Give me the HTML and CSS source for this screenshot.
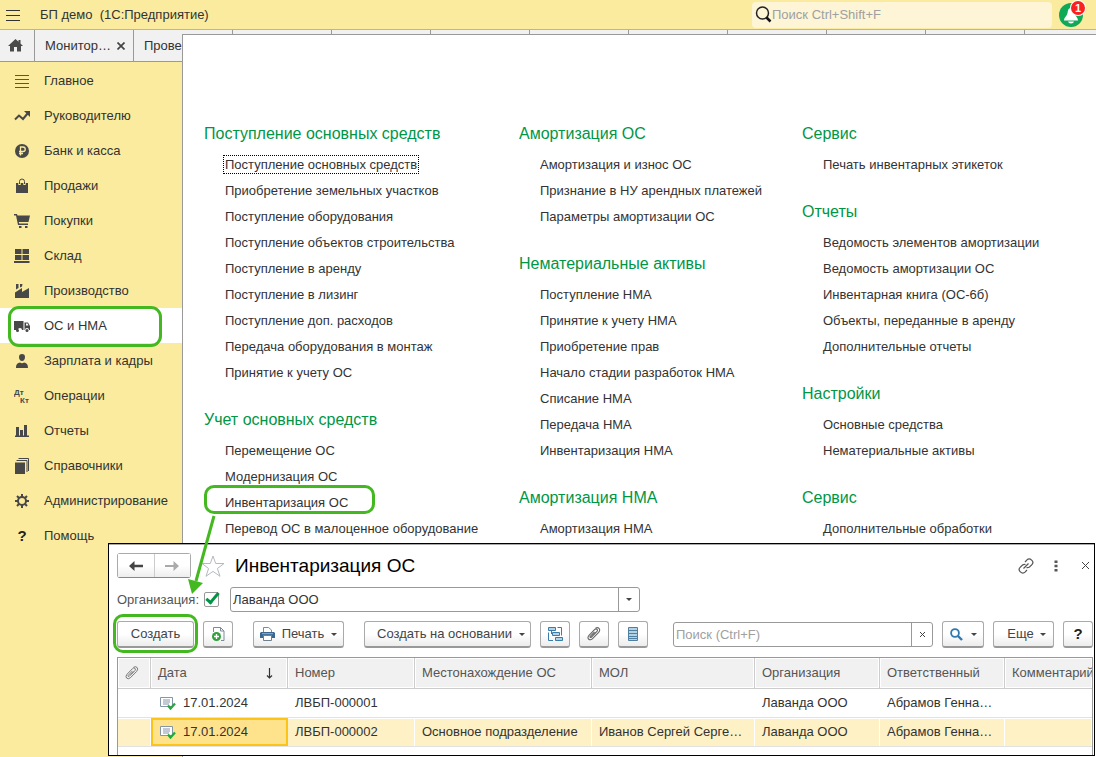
FILE: index.html
```html
<!DOCTYPE html>
<html lang="ru">
<head>
<meta charset="utf-8">
<title>БП демо (1С:Предприятие)</title>
<link rel="stylesheet" href="styles.css">
</head>
<body>
<header class="titlebar">
  <button class="plain burger" aria-label="Меню"><svg width="14" height="12" viewBox="0 0 14 12"><path d="M0 1.5h14M0 6.5h14M0 11.5h14" stroke="#333" fill="none"/></svg></button>
  <span class="app-name">БП демо &nbsp;(1С:Предприятие)</span>
  <label class="global-search">
    <svg width="17" height="17" viewBox="0 0 17 17"><circle cx="7.5" cy="7" r="6" fill="none" stroke="#222" stroke-width="1.5"/><path d="M11.5 11.5l4 4" stroke="#111" stroke-width="2.5"/></svg>
    <input type="search" aria-label="Поиск" placeholder="Поиск Ctrl+Shift+F">
  </label>
  <button class="plain bell" aria-label="Уведомления">
    <svg width="24" height="24" viewBox="0 0 24 24"><circle cx="12" cy="12" r="12" fill="#0fa958"/><path d="M12 5c-3 0-3 3-3.500 5-.5 3-3.500 4.500-3.500 7.500h14c0-3-3-4.500-3.500-7.500-.5-2-.5-5-3.500-5z" fill="#fff"/><path d="M9 18.500h6q-.5 2-3 2t-3-2z" fill="#fff"/></svg>
    <span class="badge">1</span>
  </button>
</header>

<nav class="tabs" aria-label="Вкладки">
  <button class="tab home" aria-label="Начальная страница"><svg width="15" height="13" viewBox="0 0 15 13"><path d="M7.500 0L0 7h2v5.500h4V8h3v4.500h4V7h2l-2.500-2.400V1h-2v1.800z" fill="#4a4a4a"/></svg></button>
  <button class="tab">Монитор… <svg class="tab-close" width="8" height="8" viewBox="0 0 8 8"><path d="M.5.5l7 7M7.500.5l-7 7" stroke="#444" stroke-width="1.700"/></svg></button>
  <button class="tab">Прове</button>
  <span class="tab"></span><span class="tab"></span><span class="tab"></span><span class="tab"></span><span class="tab"></span><span class="tab"></span><span class="tab"></span><span class="tab"></span>
</nav>

<main class="workspace">
  <nav class="sidebar" aria-label="Разделы">
    <a href="#"><svg viewBox="0 0 16 16"><path d="M1 2.500h14M1 6.500h14M1 10.500h14M1 14.500h14" stroke="#555" fill="none"/></svg>Главное</a>
    <a href="#"><svg viewBox="0 0 16 16"><path d="M1 11.500l4-4 4 3.500 5-6" stroke="#484848" stroke-width="2" fill="none"/><path d="M10 3h6v6z" fill="#484848"/></svg>Руководителю</a>
    <a href="#"><svg viewBox="0 0 16 16"><circle cx="8" cy="8" r="7" fill="#484848"/><path d="M6.500 12.500v-8.500h2.500a2.200 2.200 0 0 1 0 4.500h-4M5 10.500h4" stroke="#faeb9e" stroke-width="1.300" fill="none"/></svg>Банк и касса</a>
    <a href="#"><svg viewBox="0 0 16 16"><path d="M2 5h12v10H2z" fill="#484848"/><path d="M5.500 7V3.500a2.500 2.500 0 0 1 5 0V7" stroke="#faeb9e" stroke-width="2.400" fill="none"/><path d="M5.500 6V3.500a2.500 2.500 0 0 1 5 0V6" stroke="#484848" fill="none"/></svg>Продажи</a>
    <a href="#"><svg viewBox="0 0 16 16"><path d="M0 1h3l.5 1.500H16L14.500 9H4.800l.4 1.500H14V12H4L2 2.500H0zM5 13h2.500v2H5zM11 13h2.500v2H11z" fill="#484848"/></svg>Покупки</a>
    <a href="#"><svg viewBox="0 0 16 16"><path d="M1 1h6.500v5H1zM8.500 1H15v5H8.500zM1 7h6.500v5H1zM8.500 7H15v5H8.500zM0 13h15.500v2H0z" fill="#484848"/></svg>Склад</a>
    <a href="#"><svg viewBox="0 0 16 16"><path d="M1 15V9.500l7-4.500v4l7-4v10zM2 1h2.500v4L2 6.500zM6 1h2.500l-.5 2.500-2 1z" fill="#484848"/></svg>Производство</a>
    <a href="#" class="active"><svg viewBox="0 0 16 16"><path d="M0 3h9.500v9H8a2 2 0 0 0-4 0H0zM10.500 4.500H14L16 8v4h-1a2 2 0 0 0-4 0h-.5zM12 5.500v2h2.500l-1-2z" fill="#484848" fill-rule="evenodd"/><circle cx="3.500" cy="12.500" r="1.500" fill="#484848"/><circle cx="13" cy="12.500" r="1.500" fill="#484848"/></svg>ОС и НМА</a>
    <a href="#"><svg viewBox="0 0 16 16"><path d="M8 1c2 0 3 1.300 3 3 0 2-1 4-3 4S5 6 5 4c0-1.700 1-3 3-3zM2 15c0-4 1.500-5 4-5.500 1 1 3 1 4 0 2.500.5 4 1.500 4 5.500z" fill="#484848"/></svg>Зарплата и кадры</a>
    <a href="#"><svg viewBox="0 0 16 16"><text x="0" y="7" class="dtkt">Дт</text><text x="6" y="15" class="dtkt">Кт</text></svg>Операции</a>
    <a href="#"><svg viewBox="0 0 16 16"><path d="M2 4h3v8.500h1V7h3v5.500h1V2h3v10.500h2V14H1v-1.500h1z" fill="#484848"/></svg>Отчеты</a>
    <a href="#"><svg viewBox="0 0 16 16"><path d="M1 4.500h10V16H1z" fill="#484848"/><path d="M2.500 2.500h10.500V14M4.500.5h10V13" stroke="#484848" fill="none"/></svg>Справочники</a>
    <a href="#"><svg viewBox="0 0 16 16"><circle cx="8" cy="8" r="4" stroke="#484848" stroke-width="2" fill="none"/><path d="M8 1v3M8 12v3M1 8h3M12 8h3M3 3l2 2M11 11l2 2M3 13l2-2M11 5l2-2" stroke="#484848" stroke-width="2"/></svg>Администрирование</a>
    <a href="#"><b class="question">?</b>Помощь</a>
  </nav>

  <div class="menu">
    <div class="menu-col">
      <section><h2>Поступление основных средств</h2><ul>
        <li><a href="#" class="focused">Поступление основных средств</a></li><li><a href="#">Приобретение земельных участков</a></li><li><a href="#">Поступление оборудования</a></li><li><a href="#">Поступление объектов строительства</a></li><li><a href="#">Поступление в аренду</a></li><li><a href="#">Поступление в лизинг</a></li><li><a href="#">Поступление доп. расходов</a></li><li><a href="#">Передача оборудования в монтаж</a></li><li><a href="#">Принятие к учету ОС</a></li></ul></section>
      <section><h2>Учет основных средств</h2><ul>
        <li><a href="#">Перемещение ОС</a></li><li><a href="#">Модернизация ОС</a></li><li class="marked"><a href="#">Инвентаризация ОС</a></li><li><a href="#">Перевод ОС в малоценное оборудование</a></li></ul></section>
    </div>
    <div class="menu-col">
      <section><h2>Амортизация ОС</h2><ul>
        <li><a href="#">Амортизация и износ ОС</a></li><li><a href="#">Признание в НУ арендных платежей</a></li><li><a href="#">Параметры амортизации ОС</a></li></ul></section>
      <section><h2>Нематериальные активы</h2><ul>
        <li><a href="#">Поступление НМА</a></li><li><a href="#">Принятие к учету НМА</a></li><li><a href="#">Приобретение прав</a></li><li><a href="#">Начало стадии разработок НМА</a></li><li><a href="#">Списание НМА</a></li><li><a href="#">Передача НМА</a></li><li><a href="#">Инвентаризация НМА</a></li></ul></section>
      <section><h2>Амортизация НМА</h2><ul><li><a href="#">Амортизация НМА</a></li></ul></section>
    </div>
    <div class="menu-col">
      <section><h2>Сервис</h2><ul><li><a href="#">Печать инвентарных этикеток</a></li></ul></section>
      <section><h2>Отчеты</h2><ul>
        <li><a href="#">Ведомость элементов амортизации</a></li><li><a href="#">Ведомость амортизации ОС</a></li><li><a href="#">Инвентарная книга (ОС-6б)</a></li><li><a href="#">Объекты, переданные в аренду</a></li><li><a href="#">Дополнительные отчеты</a></li></ul></section>
      <section><h2>Настройки</h2><ul><li><a href="#">Основные средства</a></li><li><a href="#">Нематериальные активы</a></li></ul></section>
      <section><h2>Сервис</h2><ul><li><a href="#">Дополнительные обработки</a></li></ul></section>
    </div>
  </div>
</main>

<section class="window" aria-label="Инвентаризация ОС">
  <div class="window-head">
    <div class="history">
      <button aria-label="Назад"><svg width="14" height="10" viewBox="0 0 14 10"><path d="M0 5l5.500-5v3.700H14v2.600H5.500V10z" fill="#444"/></svg></button>
      <button aria-label="Вперед"><svg width="14" height="10" viewBox="0 0 14 10"><path d="M14 5L8.500 0v4H0v2h8.500v4z" fill="#aaa"/></svg></button>
    </div>
    <button class="plain star" aria-label="В избранное"><svg width="24" height="22" viewBox="0 0 24 22"><path d="M12 1l2.700 7.500H23l-6.600 5 2.600 7.800-7-4.900-7 4.900 2.600-7.800L1 8.500h8.300z" fill="#fff" stroke="#b5b9c0"/></svg></button>
    <h1>Инвентаризация ОС</h1>
    <button class="plain" aria-label="Ссылка"><svg width="16" height="16" viewBox="0 0 16 16"><g fill="none" stroke="#555" stroke-width="1.200"><path d="M7 4l2-2.200a3 3 0 0 1 4.300 0l.6.600a3 3 0 0 1 0 4.200L11.500 9q-1.500 1-3 .5"/><path d="M9 12l-2 2.200a3 3 0 0 1-4.300 0l-.6-.6a3 3 0 0 1 0-4.200L4.500 7q1.500-1 3-.5M5.500 10.500l5-5"/></g></svg></button>
    <button class="plain dots" aria-label="Действия"><svg width="4" height="12" viewBox="0 0 4 12"><path d="M.5.500h3v2.500h-3zM.5 4.800h3v2.500h-3zM.5 9h3v2.500h-3z" fill="#555"/></svg></button>
    <button class="plain" aria-label="Закрыть"><svg width="7" height="7" viewBox="0 0 7 7"><path d="M0 0l7 7M7 0L0 7" stroke="#444"/></svg></button>
  </div>

  <div class="filter">
    <label for="use-org">Организация:</label>
    <input type="checkbox" id="use-org" checked>
    <div class="combo org"><input type="text" aria-label="Организация" value="Лаванда ООО"><button aria-label="Выбрать"><i class="caret"></i></button></div>
  </div>

  <div class="toolbar">
    <button class="btn create">Создать</button>
    <button class="btn icon" aria-label="Скопировать"><svg width="14" height="16" viewBox="0 0 14 16"><path d="M2.500 6V1.500h7L13 5v9.500h-3M9.500 1.500V5H13" fill="none" stroke="#7d8b99"/><circle cx="5.500" cy="10.500" r="4.500" fill="#2fa23c"/><path d="M5.500 8v5M3 10.500h5" stroke="#fff" stroke-width="1.400"/></svg></button>
    <button class="btn print"><svg width="15" height="14" viewBox="0 0 15 14"><path d="M3.500 5V.5h5l3 2.500v2" fill="#fff" stroke="#7d8b99"/><path d="M1 5h13l1 1v5H0V6z" fill="#3a6791"/><path d="M3.500 8.500h8v5h-8z" fill="#fff" stroke="#6d8090"/><path d="M2 6.700h11" stroke="#8fb0cc"/></svg>Печать<i class="caret"></i></button>
    <button class="btn based">Создать на основании<i class="caret"></i></button>
    <button class="btn icon" aria-label="Структура"><svg width="15" height="15" viewBox="0 0 15 15"><g fill="#b4d2e4" stroke="#397ca8"><path d="M.5.500h7v3h-7zM4.500 5.500h7v3h-7zM7.500 10.500h7v3h-7z"/></g><path d="M9.500.5h4v8M.5 5.500v8H5M3.500 4v3" fill="none" stroke="#397ca8"/></svg></button>
    <button class="btn icon" aria-label="Файлы"><svg width="14" height="14" viewBox="0 0 14 14"><path d="M4 10.500l6-6q1-1.600-.2-2.300-1-.8-2.300.4L2 8.300Q.2 10.500 1.500 12q1.700 1.600 3.800-.2l6.400-6.400q1.800-2.400.3-4Q10.500 0 8.500 1.300M5.800 8.500l3-3M4 10.500q-1 .3-1-.9l4.500-4.700" fill="none" stroke="#666" stroke-width="1.100"/></svg></button>
    <button class="btn icon" aria-label="Список"><svg width="10" height="14" viewBox="0 0 10 14"><path d="M.5.5h9v13h-9z" fill="#b4d2e4" stroke="#50809f"/><path d="M0 3.500h10M0 6.500h10M0 9.500h10M0 11.500h10" stroke="#50809f"/></svg></button>
    <div class="combo list-search"><input type="text" aria-label="Поиск по списку" placeholder="Поиск (Ctrl+F)"><button aria-label="Очистить"><svg width="5" height="5" viewBox="0 0 5 5"><path d="M0 0l5 5M5 0L0 5" stroke="#444"/></svg></button></div>
    <button class="btn find" aria-label="Найти"><svg width="13" height="13" viewBox="0 0 13 13"><circle cx="5" cy="5" r="3.900" fill="none" stroke="#2f78b0" stroke-width="1.800"/><path d="M8 8l4 4" stroke="#2f78b0" stroke-width="2.400"/></svg><i class="caret"></i></button>
    <button class="btn more">Еще<i class="caret"></i></button>
    <button class="btn icon" aria-label="Справка"><b class="question">?</b></button>
  </div>

  <div class="grid">
    <table>
      <colgroup><col class="c-clip"><col class="c-date"><col class="c-num"><col class="c-place"><col class="c-mol"><col class="c-org"><col class="c-resp"><col></colgroup>
      <thead><tr>
        <th aria-label="Файлы" class="clip"><svg width="14" height="14" viewBox="0 0 14 14"><path d="M4 10.500l6-6q1-1.600-.2-2.300-1-.8-2.300.4L2 8.300Q.2 10.500 1.500 12q1.700 1.600 3.800-.2l6.400-6.400q1.800-2.400.3-4Q10.500 0 8.500 1.300M5.800 8.500l3-3M4 10.500q-1 .3-1-.9l4.500-4.700" fill="none" stroke="#777"/></svg></th>
        <th><div class="sort">Дата<svg width="7" height="11" viewBox="0 0 7 11"><path d="M3.500 0v10M1 7.500l2.500 2.500L6 7.500" fill="none" stroke="#333" stroke-width="1.200"/></svg></div></th>
        <th>Номер</th><th>Местонахождение ОС</th><th>МОЛ</th><th>Организация</th><th>Ответственный</th><th class="last">Комментарий</th>
      </tr></thead>
      <tbody>
        <tr><td></td><td><div class="doc"><svg width="16" height="13" viewBox="0 0 16 13"><path d="M.5.500h12v9H.5z" fill="#fff" stroke="#8496a8"/><path d="M3 3h7M3 5h7M3 7h6" stroke="#8496a8"/><path d="M8 8.500l2.500 3 4.500-5" fill="none" stroke="#25a83b" stroke-width="2.300"/></svg>17.01.2024</div></td><td>ЛВБП-000001</td><td></td><td></td><td>Лаванда ООО</td><td>Абрамов Генна…</td><td></td></tr>
        <tr class="selected"><td></td><td class="current"><div class="doc"><svg width="16" height="13" viewBox="0 0 16 13"><path d="M.5.500h12v9H.5z" fill="#fff" stroke="#8496a8"/><path d="M3 3h7M3 5h7M3 7h6" stroke="#8496a8"/><path d="M8 8.500l2.500 3 4.500-5" fill="none" stroke="#25a83b" stroke-width="2.300"/></svg>17.01.2024</div></td><td>ЛВБП-000002</td><td>Основное подразделение</td><td>Иванов Сергей Серге…</td><td>Лаванда ООО</td><td>Абрамов Генна…</td><td></td></tr>
      </tbody>
    </table>
  </div>
</section>

<svg class="arrow" width="30" height="80" viewBox="0 0 30 80"><path d="M27 1L9 66" stroke="#43b820" stroke-width="3"/><path d="M1 64l15 4L5 79z" fill="#43b820"/></svg>
</body>
</html>
```

FILE: styles.css
```css
*, *::before, *::after { box-sizing: border-box; }

body {
  margin: 0;
  height: 100vh;
  overflow: hidden;
  position: relative;
  display: flex;
  flex-direction: column;
  background: #faeb9e;
  color: #333;
  font: 13px/16px "Liberation Sans", Arial, sans-serif;
}

button, input { font: inherit; color: inherit; margin: 0; }
button { padding: 0; }
svg { flex: none; display: block; }
a { color: inherit; text-decoration: none; }
::placeholder { color: #a0a0a0; opacity: 1; }
.plain { border: 0; background: none; display: flex; align-items: center; justify-content: center; }

/* Title bar */
.titlebar {
  flex: none;
  display: flex;
  align-items: center;
  height: 30px;
  padding: 0 13px 0 6px;
  border-bottom: 1px solid #c3b977;
}
.app-name { margin-left: 20px; flex: 1; }
.global-search {
  display: flex;
  align-items: center;
  width: 300px;
  height: 26px;
  padding-left: 3px;
  border-radius: 4px;
  background: #fdf5d5;
}
.global-search input { flex: 1; min-width: 0; border: 0; padding: 0; outline: 0; background: none; }
.bell { position: relative; margin-left: 7px; }
.badge {
  position: absolute;
  top: -2px;
  right: -2px;
  width: 14px;
  height: 14px;
  border-radius: 50%;
  background: #fa2020;
  box-shadow: 0 0 0 1px #fff;
  color: #fff;
  font-weight: bold;
  font-size: 11px;
  line-height: 14px;
  text-align: center;
}

/* Tabs */
.tabs {
  flex: none;
  display: flex;
  height: 32px;
  overflow: hidden;
  background: #f1f1f1;
  border-bottom: 1px solid #999;
}
.tab {
  flex: none;
  display: flex;
  align-items: center;
  justify-content: space-between;
  width: 99px;
  padding: 0 8px 0 10px;
  border: 0;
  border-right: 1px solid #999;
  background: none;
}
.home { width: 35px; padding: 0 0 0 8px; }

/* Sections */
.workspace { flex: 1; min-height: 0; display: flex; }
.sidebar { flex: none; width: 182px; padding-top: 1px; }
.sidebar a { display: flex; align-items: center; gap: 14px; height: 35px; padding-left: 14px; position: relative; }
.sidebar svg { width: 16px; height: 16px; }
.sidebar .active { background: #fff; }
.sidebar .active::after {
  content: "";
  position: absolute;
  inset: -2px 20px -4px 8px;
  border: 3px solid #43b820;
  border-radius: 11px;
  z-index: 1;
}
.question { width: 16px; text-align: center; font-size: 15px; color: #222; }
.dtkt { font-size: 8px; font-weight: bold; fill: #484848; }

/* Command menu */
.menu {
  flex: 1;
  display: grid;
  grid-template-columns: 315px 283px 1fr;
  margin-top: -28px;
  padding: 81px 0 0 21px;
  border: 1px solid #999;
  border-width: 1px 0 0 1px;
  background: #fff;
  position: relative;
}
.menu-col { display: flex; flex-direction: column; gap: 16px; white-space: nowrap; }
.menu h2 { margin: 0; font-size: 16px; font-weight: normal; line-height: 36px; color: #009646; }
.menu ul { margin: 0; padding: 0 0 0 21px; list-style: none; }
.menu li { line-height: 26px; position: relative; }
.focused { outline: 1px dotted #000; outline-offset: 1px; }
.marked::after {
  content: "";
  position: absolute;
  left: -21px;
  top: -5px;
  width: 171px;
  height: 29px;
  border: 3px solid #43b820;
  border-radius: 10px;
}

/* Document list window */
.window {
  position: absolute;
  inset: 543px 1px 1px 108px;
  display: flex;
  flex-direction: column;
  padding: 9px 1px 0 8px;
  border: 1px solid #000;
  box-shadow: inset 0 1px #aaa;
  background: #fff;
}
.window-head { display: flex; align-items: center; height: 25px; padding-right: 4px; }
.history { display: flex; width: 74px; height: 25px; border: 1px solid #aaa; border-bottom-color: #888; border-radius: 3px; }
.history button {
  flex: 1;
  display: flex;
  align-items: center;
  justify-content: center;
  border: 0;
  background: linear-gradient(#fff 50%, #eee);
}
.history button + button { border-left: 1px solid #ccc; }
.star { margin-left: 10px; }
h1 { flex: 1; margin: 0 0 0 10px; font-size: 19px; line-height: 24px; font-weight: normal; color: #000; }
.dots { margin: 0 24px 0 20px; }

.filter { display: flex; align-items: center; height: 25px; margin-top: 9px; color: #555; }
.filter label { width: 87px; white-space: nowrap; }
.filter input[type="checkbox"] {
  appearance: none;
  flex: none;
  width: 15px;
  height: 15px;
  margin-right: 11px;
  border: 1px solid #999;
  border-radius: 2px;
  position: relative;
}
.filter input[type="checkbox"]:checked::after {
  content: "";
  position: absolute;
  left: 4px;
  top: -3px;
  width: 7px;
  height: 14px;
  border: solid #009646;
  border-width: 0 3px 3px 0;
  transform: rotate(40deg);
}
.combo { display: flex; height: 25px; border: 1px solid #999; border-radius: 3px; background: #fff; }
.combo input { flex: 1; min-width: 0; border: 0; padding: 0 2px; outline: 0; background: none; }
.combo button { display: flex; align-items: center; justify-content: center; width: 21px; border: 0; border-left: 1px solid #999; background: none; }
.org { width: 410px; color: #333; }
.caret { border: 3px solid transparent; border-top-color: #444; border-bottom: 0; }

.toolbar { display: flex; align-items: center; gap: 9px; margin-top: 9px; color: #444; }
.btn {
  flex: none;
  display: flex;
  align-items: center;
  justify-content: center;
  height: 27px;
  border: 1px solid #aaa;
  border-bottom: 2px solid #999;
  border-radius: 3px;
  background: linear-gradient(#fff 50%, #ececec);
  white-space: nowrap;
  position: relative;
}
.icon { width: 30px; }
.create { width: 77px; }
.create::after {
  content: "";
  position: absolute;
  inset: -8px -5px -7px;
  border: 3px solid #43b820;
  border-radius: 10px;
}
.print { width: 91px; margin-left: 11px; gap: 7px; }
.based { width: 167px; margin-left: 11px; padding-left: 7px; gap: 7px; }
.list-search { flex: 1; margin-left: 16px; }
.find { width: 42px; gap: 8px; }
.more { width: 61px; gap: 6px; padding-left: 6px; }

/* Table */
.grid { flex: 1; min-height: 0; margin-top: 9px; overflow: hidden; border: 1px solid #999; border-bottom: 0; }
table { width: 100%; table-layout: fixed; border-collapse: separate; border-spacing: 0; }
.c-clip { width: 33px; }
.c-date { width: 137px; }
.c-num { width: 127px; }
.c-place { width: 177px; }
.c-mol { width: 163px; }
.c-org { width: 125px; }
.c-resp { width: 125px; }
th, td { padding: 0 0 0 7px; text-align: left; white-space: nowrap; overflow: hidden; }
th { height: 31px; font-weight: normal; color: #555; background: #f1f1f1; border-right: 1px solid #ccc; border-bottom: 1px solid #ccc; box-shadow: inset 0 0 0 1px #fff; }
.last { border-right: 0; }
td { height: 29px; border-bottom: 1px solid #e2e2e2; }
.sort { display: flex; align-items: center; justify-content: space-between; padding-right: 14px; }
.doc { display: flex; align-items: center; gap: 7px; padding-left: 2px; }
.selected td { background: #fdf1c5; box-shadow: inset -1px 0 #fff, inset 0 1px #fff; }
.selected .current { background: #ffe38c; box-shadow: inset 0 0 0 2px #fcc419; }

/* Pointer from the command to the create button */
.arrow { position: absolute; left: 187px; top: 515px; }
```
